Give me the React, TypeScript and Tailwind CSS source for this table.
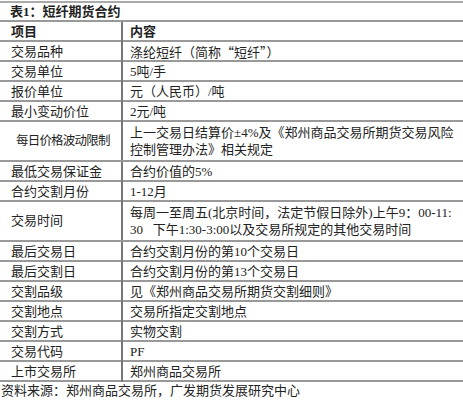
type Row = { label: string; content: React.ReactNode[]; labelClass?: string };

const cjk = { fontFamily: "'Noto Sans CJK SC', sans-serif" };

const rows: Row[] = [
  {
    label: "交易品种",
    content: [
      <>
        涤纶短纤（简称<span style={cjk}>“</span>短纤<span style={cjk}>”</span>）
      </>,
    ],
  },
  { label: "交易单位", content: ["5吨/手"] },
  { label: "报价单位", content: ["元（人民币）/吨"] },
  { label: "最小变动价位", content: ["2元/吨"] },
  {
    label: "每日价格波动限制",
    content: ["上一交易日结算价±4%及《郑州商品交易所期货交易风险", "控制管理办法》相关规定"],
    labelClass: "pl-[16px] text-[12.5px] tracking-[-0.8px]",
  },
  { label: "最低交易保证金", content: ["合约价值的5%"] },
  { label: "合约交割月份", content: ["1-12月"] },
  {
    label: "交易时间",
    content: ["每周一至周五(北京时间，法定节假日除外)上午9：00-11:", "30\u00a0\u00a0\u00a0下午1:30-3:00以及交易所规定的其他交易时间"],
  },
  { label: "最后交易日", content: ["合约交割月份的第10个交易日"] },
  { label: "最后交割日", content: ["合约交割月份的第13个交易日"] },
  { label: "交割品级", content: ["见《郑州商品交易所期货交割细则》"] },
  { label: "交割地点", content: ["交易所指定交割地点"] },
  { label: "交割方式", content: ["实物交割"] },
  { label: "交易代码", content: ["PF"] },
  { label: "上市交易所", content: ["郑州商品交易所"] },
];

export default function App() {
  return (
    <div
      className="w-[463px] h-[400px] bg-white text-[#222] text-[13px] overflow-hidden"
      style={{ fontFamily: "'Liberation Serif', 'Noto Sans CJK SC', serif" }}
    >
      <div className="mt-[1px] border-t-2 border-[#aaa]" />
      <div className="h-[19px] flex items-center pl-[10px] font-bold border-b-2 border-[#999]">
        表1：短纤期货合约
      </div>
      <div className="grid grid-cols-[123px_1fr] h-[20px] border-b-2 border-[#999] font-bold">
        <div className="pl-[11px] flex items-center border-r-2 border-[#777]">项目</div>
        <div className="pl-[7px] flex items-center">内容</div>
      </div>
      {rows.map((r) => (
        <div
          key={r.label}
          className={`grid grid-cols-[123px_1fr] border-b-2 border-[#999] ${r.content.length > 1 ? "h-[40px]" : "h-[20px]"}`}
        >
          <div className={`flex items-center border-r-2 border-[#777] whitespace-nowrap ${r.labelClass ?? "pl-[11px]"}`}>
            {r.label}
          </div>
          <div className="pl-[7px] flex flex-col justify-center leading-[17px]">
            {r.content.map((line, i) => (
              <div key={i} className="whitespace-nowrap">
                {line}
              </div>
            ))}
          </div>
        </div>
      ))}
      <div className="h-[18px] flex items-center pl-[1px] whitespace-nowrap">
        资料来源：郑州商品交易所，广发期货发展研究中心
      </div>
    </div>
  );
}
